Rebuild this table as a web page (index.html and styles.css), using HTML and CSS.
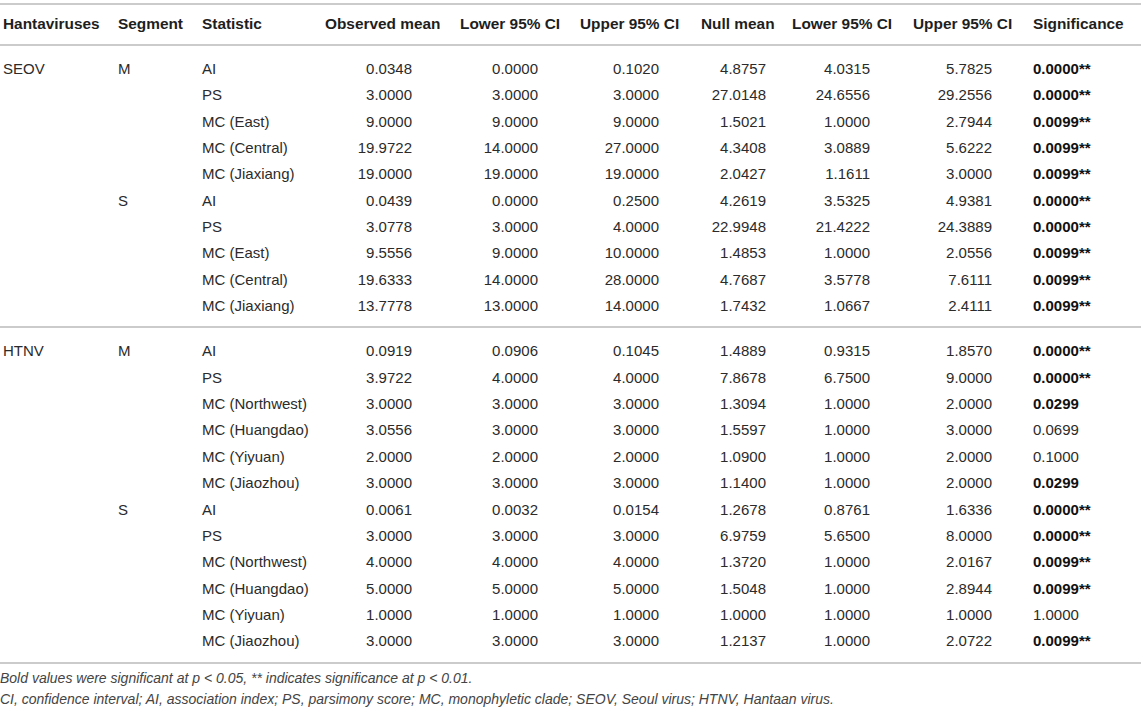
FILE: index.html
```html
<!DOCTYPE html>
<html lang="en">
<head>
    <meta charset="UTF-8">
    <title>Phylogeny-trait association tests</title>
    <link rel="stylesheet" href="styles.css">
</head>
<body>

    <table class="stats">
        <colgroup>
            <col class="c-virus">
            <col class="c-seg">
            <col class="c-stat">
            <col class="c-obs">
            <col class="c-lo1">
            <col class="c-up1">
            <col class="c-null">
            <col class="c-lo2">
            <col class="c-up2">
            <col class="c-sig">
        </colgroup>
        <thead>
            <tr>
                <th>Hantaviruses</th>
                <th>Segment</th>
                <th>Statistic</th>
                <th>Observed mean</th>
                <th>Lower 95% CI</th>
                <th>Upper 95% CI</th>
                <th>Null mean</th>
                <th>Lower 95% CI</th>
                <th>Upper 95% CI</th>
                <th>Significance</th>
            </tr>
        </thead>
        <tbody>
            <tr class="first"><td>SEOV</td><td>M</td><td>AI</td><td class="n obs">0.0348</td><td class="n lo1">0.0000</td><td class="n up1">0.1020</td><td class="n null">4.8757</td><td class="n lo2">4.0315</td><td class="n up2">5.7825</td><td class="sig"><b>0.0000**</b></td></tr>
            <tr><td></td><td></td><td>PS</td><td class="n obs">3.0000</td><td class="n lo1">3.0000</td><td class="n up1">3.0000</td><td class="n null">27.0148</td><td class="n lo2">24.6556</td><td class="n up2">29.2556</td><td class="sig"><b>0.0000**</b></td></tr>
            <tr><td></td><td></td><td>MC (East)</td><td class="n obs">9.0000</td><td class="n lo1">9.0000</td><td class="n up1">9.0000</td><td class="n null">1.5021</td><td class="n lo2">1.0000</td><td class="n up2">2.7944</td><td class="sig"><b>0.0099**</b></td></tr>
            <tr><td></td><td></td><td>MC (Central)</td><td class="n obs">19.9722</td><td class="n lo1">14.0000</td><td class="n up1">27.0000</td><td class="n null">4.3408</td><td class="n lo2">3.0889</td><td class="n up2">5.6222</td><td class="sig"><b>0.0099**</b></td></tr>
            <tr><td></td><td></td><td>MC (Jiaxiang)</td><td class="n obs">19.0000</td><td class="n lo1">19.0000</td><td class="n up1">19.0000</td><td class="n null">2.0427</td><td class="n lo2">1.1611</td><td class="n up2">3.0000</td><td class="sig"><b>0.0099**</b></td></tr>
            <tr><td></td><td>S</td><td>AI</td><td class="n obs">0.0439</td><td class="n lo1">0.0000</td><td class="n up1">0.2500</td><td class="n null">4.2619</td><td class="n lo2">3.5325</td><td class="n up2">4.9381</td><td class="sig"><b>0.0000**</b></td></tr>
            <tr><td></td><td></td><td>PS</td><td class="n obs">3.0778</td><td class="n lo1">3.0000</td><td class="n up1">4.0000</td><td class="n null">22.9948</td><td class="n lo2">21.4222</td><td class="n up2">24.3889</td><td class="sig"><b>0.0000**</b></td></tr>
            <tr><td></td><td></td><td>MC (East)</td><td class="n obs">9.5556</td><td class="n lo1">9.0000</td><td class="n up1">10.0000</td><td class="n null">1.4853</td><td class="n lo2">1.0000</td><td class="n up2">2.0556</td><td class="sig"><b>0.0099**</b></td></tr>
            <tr><td></td><td></td><td>MC (Central)</td><td class="n obs">19.6333</td><td class="n lo1">14.0000</td><td class="n up1">28.0000</td><td class="n null">4.7687</td><td class="n lo2">3.5778</td><td class="n up2">7.6111</td><td class="sig"><b>0.0099**</b></td></tr>
            <tr class="last"><td></td><td></td><td>MC (Jiaxiang)</td><td class="n obs">13.7778</td><td class="n lo1">13.0000</td><td class="n up1">14.0000</td><td class="n null">1.7432</td><td class="n lo2">1.0667</td><td class="n up2">2.4111</td><td class="sig"><b>0.0099**</b></td></tr>
        </tbody>
        <tbody>
            <tr class="first"><td>HTNV</td><td>M</td><td>AI</td><td class="n obs">0.0919</td><td class="n lo1">0.0906</td><td class="n up1">0.1045</td><td class="n null">1.4889</td><td class="n lo2">0.9315</td><td class="n up2">1.8570</td><td class="sig"><b>0.0000**</b></td></tr>
            <tr><td></td><td></td><td>PS</td><td class="n obs">3.9722</td><td class="n lo1">4.0000</td><td class="n up1">4.0000</td><td class="n null">7.8678</td><td class="n lo2">6.7500</td><td class="n up2">9.0000</td><td class="sig"><b>0.0000**</b></td></tr>
            <tr><td></td><td></td><td>MC (Northwest)</td><td class="n obs">3.0000</td><td class="n lo1">3.0000</td><td class="n up1">3.0000</td><td class="n null">1.3094</td><td class="n lo2">1.0000</td><td class="n up2">2.0000</td><td class="sig"><b>0.0299</b></td></tr>
            <tr><td></td><td></td><td>MC (Huangdao)</td><td class="n obs">3.0556</td><td class="n lo1">3.0000</td><td class="n up1">3.0000</td><td class="n null">1.5597</td><td class="n lo2">1.0000</td><td class="n up2">3.0000</td><td class="sig">0.0699</td></tr>
            <tr><td></td><td></td><td>MC (Yiyuan)</td><td class="n obs">2.0000</td><td class="n lo1">2.0000</td><td class="n up1">2.0000</td><td class="n null">1.0900</td><td class="n lo2">1.0000</td><td class="n up2">2.0000</td><td class="sig">0.1000</td></tr>
            <tr><td></td><td></td><td>MC (Jiaozhou)</td><td class="n obs">3.0000</td><td class="n lo1">3.0000</td><td class="n up1">3.0000</td><td class="n null">1.1400</td><td class="n lo2">1.0000</td><td class="n up2">2.0000</td><td class="sig"><b>0.0299</b></td></tr>
            <tr><td></td><td>S</td><td>AI</td><td class="n obs">0.0061</td><td class="n lo1">0.0032</td><td class="n up1">0.0154</td><td class="n null">1.2678</td><td class="n lo2">0.8761</td><td class="n up2">1.6336</td><td class="sig"><b>0.0000**</b></td></tr>
            <tr><td></td><td></td><td>PS</td><td class="n obs">3.0000</td><td class="n lo1">3.0000</td><td class="n up1">3.0000</td><td class="n null">6.9759</td><td class="n lo2">5.6500</td><td class="n up2">8.0000</td><td class="sig"><b>0.0000**</b></td></tr>
            <tr><td></td><td></td><td>MC (Northwest)</td><td class="n obs">4.0000</td><td class="n lo1">4.0000</td><td class="n up1">4.0000</td><td class="n null">1.3720</td><td class="n lo2">1.0000</td><td class="n up2">2.0167</td><td class="sig"><b>0.0099**</b></td></tr>
            <tr><td></td><td></td><td>MC (Huangdao)</td><td class="n obs">5.0000</td><td class="n lo1">5.0000</td><td class="n up1">5.0000</td><td class="n null">1.5048</td><td class="n lo2">1.0000</td><td class="n up2">2.8944</td><td class="sig"><b>0.0099**</b></td></tr>
            <tr><td></td><td></td><td>MC (Yiyuan)</td><td class="n obs">1.0000</td><td class="n lo1">1.0000</td><td class="n up1">1.0000</td><td class="n null">1.0000</td><td class="n lo2">1.0000</td><td class="n up2">1.0000</td><td class="sig">1.0000</td></tr>
            <tr class="last"><td></td><td></td><td>MC (Jiaozhou)</td><td class="n obs">3.0000</td><td class="n lo1">3.0000</td><td class="n up1">3.0000</td><td class="n null">1.2137</td><td class="n lo2">1.0000</td><td class="n up2">2.0722</td><td class="sig"><b>0.0099**</b></td></tr>
        </tbody>
    </table>

    <div class="notes">
        <p>Bold values were significant at p &lt; 0.05, ** indicates significance at p &lt; 0.01.</p>
        <p>CI, confidence interval; AI, association index; PS, parsimony score; MC, monophyletic clade; SEOV, Seoul virus; HTNV, Hantaan virus.</p>
    </div>

</body>
</html>
```

FILE: styles.css
```css
body {
    margin: 0;
    padding: 0;
    background-color: #fff;
    font-family: 'Liberation Sans', Arial, Helvetica, sans-serif;
    color: #2b2b2b;
}

.stats {
    width: 1141px;
    margin-top: 3px;
    border-collapse: collapse;
    table-layout: fixed;
    font-size: 15px;
}

.c-virus { width: 115px; }
.c-seg { width: 84px; }
.c-stat { width: 123px; }
.c-obs { width: 135px; }
.c-lo1 { width: 120px; }
.c-up1 { width: 121px; }
.c-null { width: 91px; }
.c-lo2 { width: 121px; }
.c-up2 { width: 120px; }
.c-sig { width: 111px; }

.stats thead tr {
    border-top: 2px solid #cbcbcb;
}

.stats th {
    text-align: left;
    font-weight: bold;
    font-size: 15.4px;
    color: #1e1e1e;
    line-height: 20px;
    padding: 9px 0 10px 3px;
    white-space: nowrap;
}

.stats tbody {
    border-top: 2px solid #cbcbcb;
}

.stats tbody:last-child {
    border-bottom: 2px solid #cbcbcb;
}

.stats td {
    line-height: 26.35px;
    padding: 0 0 0 3px;
    white-space: nowrap;
}

.stats tr.first td {
    padding-top: 10px;
}

.stats tr.last td {
    padding-bottom: 7px;
}

.stats td.n {
    text-align: right;
    padding-left: 0;
}

.stats td.obs { padding-right: 45px; }
.stats td.lo1 { padding-right: 39px; }
.stats td.up1 { padding-right: 39px; }
.stats td.null { padding-right: 23px; }
.stats td.lo2 { padding-right: 40px; }
.stats td.up2 { padding-right: 38px; }

.stats td.sig b {
    color: #111;
}

.notes {
    padding: 4px 0 0 0;
    font-size: 14px;
    font-style: italic;
    color: #444;
}

.notes p {
    margin: 0;
    line-height: 21px;
}
```
